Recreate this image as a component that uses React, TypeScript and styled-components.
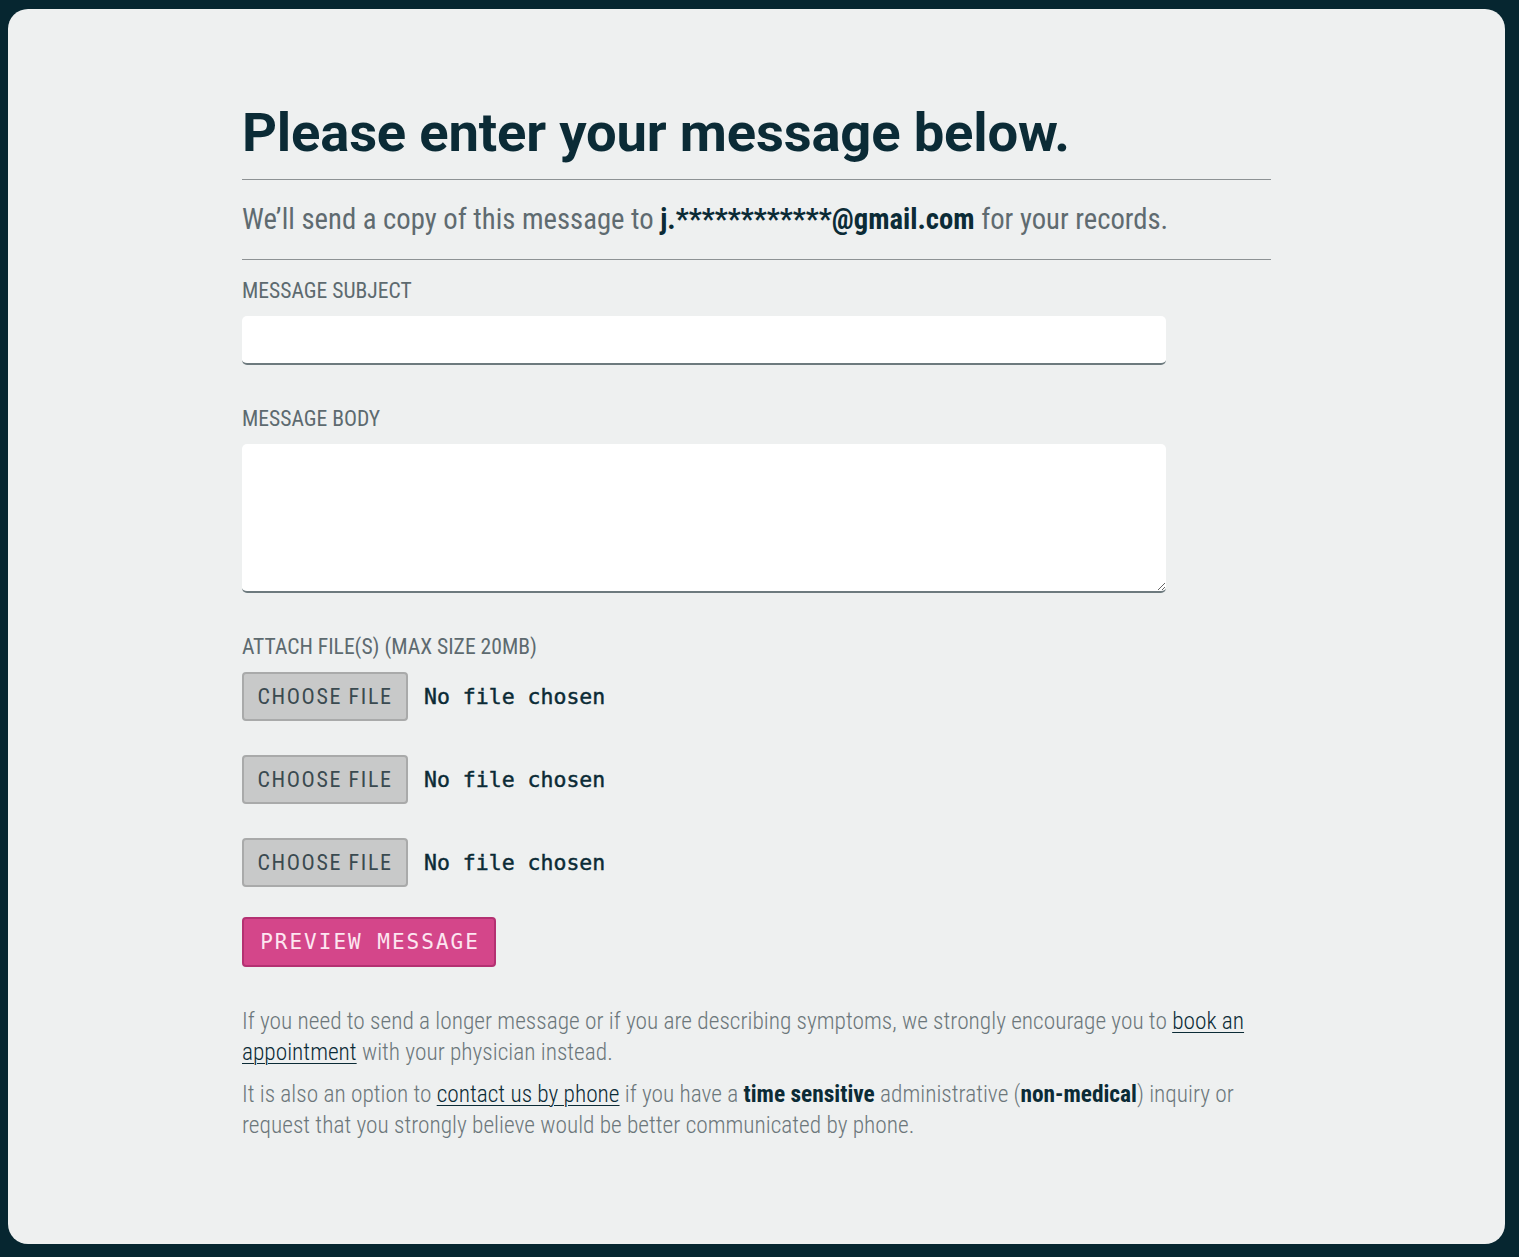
import React from "react";
import styled, { createGlobalStyle } from "styled-components";

const Global = createGlobalStyle`
  html, body { margin: 0; padding: 0; background: #062630; }
  body { font-family: Roboto, "Noto Sans", sans-serif; }
  * { box-sizing: border-box; }
`;

const cond = `font-family: "Roboto Condensed", Roboto, sans-serif; font-stretch: 75%;`;

const Page = styled.div`
  padding: 9px 14px 13px 8px;
  min-height: 1257px;
`;

const Card = styled.main`
  background: #eef0f0;
  border-radius: 20px;
  min-height: 1235px;
  padding: 90px 234px 60px 234px;
`;

const Title = styled.h1`
  margin: 0 0 13px;
  font-family: Roboto, sans-serif;
  font-weight: 700;
  font-size: 54.4px;
  line-height: 67px;
  color: #0b2b36;
  letter-spacing: -0.2px;
`;

const Rule = styled.hr`
  margin: 0;
  border: 0;
  border-top: 1px solid #8d9294;
`;

const Notice = styled.p`
  margin: 0;
  padding: 22px 0 23px;
  ${cond}
  font-size: 28.7px;
  line-height: 34px;
  color: #5f6b70;
`;

const Strong = styled.strong`
  font-weight: 700;
  color: #0b2b36;
`;

const Field = styled.div<{ $top: number }>`
  display: flex;
  flex-direction: column;
  align-items: flex-start;
  gap: 12px;
  margin-top: ${(p) => p.$top}px;
`;

const Label = styled.label`
  ${cond}
  font-size: 21.6px;
  line-height: 26px;
  color: #5d6a6f;
  text-transform: uppercase;
`;

const TextInput = styled.input`
  width: 924px;
  height: 49px;
  border: 0;
  border-bottom: 2px solid #6d7a7e;
  border-radius: 5px;
  background: #fff;
  padding: 0 14px;
  font-size: 20px;
  outline: none;
`;

const TextArea = styled.textarea`
  width: 924px;
  height: 149px;
  border: 0;
  border-bottom: 2px solid #6d7a7e;
  border-radius: 5px;
  background: #fff;
  padding: 12px 14px;
  font-size: 20px;
  outline: none;
  display: block;
`;

const FileList = styled.div`
  display: flex;
  flex-direction: column;
  gap: 34px;
`;

const FileRow = styled.div`
  display: flex;
  align-items: center;
  gap: 16px;
`;

const FileButton = styled.button`
  width: 166px;
  height: 49px;
  background: #c8c9c9;
  border: 2px solid #a9aaaa;
  border-radius: 4px;
  ${cond}
  font-size: 22px;
  letter-spacing: 1.6px;
  color: #3a4a50;
  padding: 0;
  cursor: pointer;
`;

const FileName = styled.span`
  font-family: "DejaVu Sans Mono", "Liberation Mono", monospace;
  font-size: 21.5px;
  color: #0b2b36;
  font-weight: 400;
  -webkit-text-stroke: 0.45px #0b2b36;
`;

const PreviewButton = styled.button`
  margin-top: 18px;
  width: 254px;
  height: 50px;
  background: #d4468a;
  border: 2px solid #b43172;
  border-radius: 4px;
  font-family: "DejaVu Sans Mono", "Liberation Mono", monospace;
  font-size: 21px;
  letter-spacing: 2px;
  color: #fde6f1;
  padding: 0 0 0 2px;
  cursor: pointer;
`;

const Notes = styled.div`
  margin-top: 39px;
  display: flex;
  flex-direction: column;
  gap: 11px;
`;

const Note = styled.p`
  margin: 0;
  ${cond}
  font-weight: 300;
  font-size: 23.35px;
  line-height: 31px;
  color: #6c777b;
`;

const Link = styled.a`
  color: #0b2b36;
  text-decoration: underline;
  text-underline-offset: 3px;
  text-decoration-thickness: 1px;
  font-weight: 300;
`;

export default function App() {
  return (
    <>
      <Global />
      <Page>
        <Card>
          <Title>Please enter your message below.</Title>
          <Rule />
          <Notice>
            We’ll send a copy of this message to <Strong>j.************@gmail.com</Strong> for your records.
          </Notice>
          <Rule />
          <Field $top={18}>
            <Label htmlFor="subject">Message Subject</Label>
            <TextInput id="subject" type="text" />
          </Field>
          <Field $top={41}>
            <Label htmlFor="body">Message Body</Label>
            <TextArea id="body" />
          </Field>
          <Field $top={41}>
            <Label>Attach File(s) (Max size 20MB)</Label>
            <FileList>
              {[0, 1, 2].map((i) => (
                <FileRow key={i}>
                  <FileButton type="button">CHOOSE FILE</FileButton>
                  <FileName>No file chosen</FileName>
                </FileRow>
              ))}
            </FileList>
            <PreviewButton type="button">PREVIEW MESSAGE</PreviewButton>
          </Field>
          <Notes>
            <Note>
              If you need to send a longer message or if you are describing symptoms, we strongly encourage you to{" "}
              <Link href="#">book an appointment</Link> with your physician instead.
            </Note>
            <Note>
              It is also an option to <Link href="#">contact us by phone</Link> if you have a{" "}
              <Strong>time sensitive</Strong> administrative (<Strong>non-medical</Strong>) inquiry or request that you
              strongly believe would be better communicated by phone.
            </Note>
          </Notes>
        </Card>
      </Page>
    </>
  );
}
